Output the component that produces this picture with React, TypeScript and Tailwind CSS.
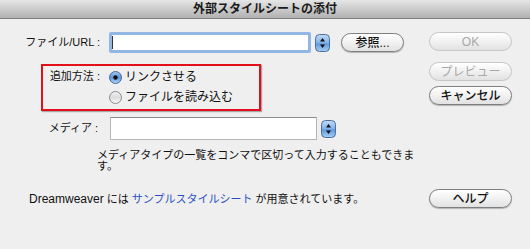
import React from "react";

const FONT = "font-['Liberation_Sans','Noto_Sans_CJK_JP',sans-serif]";

function Stepper({ className = "" }: { className?: string }) {
  return (
    <svg width="15" height="18" viewBox="0 0 15 18" className={className}>
      <defs>
        <linearGradient id="stp" x1="0" y1="0" x2="0" y2="1">
          <stop offset="0" stopColor="#c4dcf6" />
          <stop offset="0.5" stopColor="#7fb0e8" />
          <stop offset="0.55" stopColor="#5f98dc" />
          <stop offset="1" stopColor="#a9d0f6" />
        </linearGradient>
      </defs>
      <rect x="0.5" y="0.5" width="14" height="17" rx="4" fill="url(#stp)" stroke="#4a6e9e" />
      <path d="M7.5 4 L10 7.5 L5 7.5 Z" fill="#111" />
      <path d="M7.5 14 L10 10.5 L5 10.5 Z" fill="#111" />
    </svg>
  );
}

function Radio({ checked }: { checked: boolean }) {
  return (
    <svg width="13" height="13" viewBox="0 0 13 13">
      <defs>
        <linearGradient id="rOn" x1="0" y1="0" x2="0" y2="1">
          <stop offset="0" stopColor="#a7c9ef" />
          <stop offset="0.5" stopColor="#5d96dc" />
          <stop offset="1" stopColor="#b5d6f7" />
        </linearGradient>
        <linearGradient id="rOff" x1="0" y1="0" x2="0" y2="1">
          <stop offset="0" stopColor="#f4f4f4" />
          <stop offset="0.5" stopColor="#dcdcdc" />
          <stop offset="1" stopColor="#fbfbfb" />
        </linearGradient>
      </defs>
      <circle cx="6.5" cy="6.5" r="6" fill={checked ? "url(#rOn)" : "url(#rOff)"} stroke={checked ? "#45699a" : "#8a8a8a"} />
      {checked && <circle cx="6.5" cy="6.5" r="2.2" fill="#111" />}
    </svg>
  );
}

function AquaButton({ label, disabled = false }: { label: string; disabled?: boolean }) {
  return (
    <div
      className={`h-[19px] rounded-full border flex items-center justify-center text-[12px] leading-none bg-gradient-to-b from-[#ffffff] via-[#f1f1f1] to-[#e2e2e2] ${
        disabled
          ? "border-[#c6c6c6] text-[#a8a8a8]"
          : "border-[#7e7e7e] text-[#111] font-medium shadow-[0_1px_1px_rgba(0,0,0,0.25)]"
      }`}
    >
      {label}
    </div>
  );
}

export default function App() {
  return (
    <div className={`w-[530px] h-[249px] bg-[#efefef] text-[#111] ${FONT} overflow-hidden`}>
      {/* title bar */}
      <div className="h-[19px] bg-gradient-to-b from-[#e6e6e6] to-[#b1b1b1] border-b border-[#808080] flex items-center justify-center text-[12px] font-bold text-[#1a1a1a]">
        外部スタイルシートの添付
      </div>

      <div className="flex">
        {/* left form */}
        <div className="flex-1 pt-[13px]">
          <div className="flex items-center h-[21px]">
            <div className="w-[100px] text-right text-[11px]">ファイル/URL :</div>
            <div className="ml-[9px] w-[202px] h-[21px] rounded-[2px] border-[3px] border-[#92b7e4] bg-white flex items-center">
              <div className="w-px h-[13px] bg-[#333]" />
            </div>
            <Stepper className="ml-[4px]" />
            <div className="ml-[11px] w-[63px]">
              <AquaButton label="参照..." />
            </div>
          </div>

          <div className="mt-[11px] ml-[41px] w-[220px] h-[47px] border-2 border-[#e3101c] shadow-[1px_1px_1px_rgba(0,0,0,0.3)] flex pt-[1px]">
            <div className="w-[57px] text-right text-[11px] leading-[14px] pt-[2px]">追加方法 :</div>
            <div className="ml-[9px] flex flex-col">
              <div className="h-[20px] flex items-center gap-[3px] text-[12px]">
                <Radio checked />
                <span>リンクさせる</span>
              </div>
              <div className="h-[20px] flex items-center gap-[3px] text-[12px]">
                <Radio checked={false} />
                <span>ファイルを読み込む</span>
              </div>
            </div>
          </div>

          <div className="mt-[6px] flex items-center h-[23px]">
            <div className="w-[98px] text-right text-[11px]">メディア :</div>
            <div className="ml-[12px] w-[207px] h-[23px] bg-white border border-[#b5b5b5] border-t-[#8c8c8c]" />
            <Stepper className="ml-[4px]" />
          </div>

          <div className="mt-[10px] ml-[97px] text-[11px] leading-[11px]">
            メディアタイプの一覧をコンマで区切って入力することもできま
            <br />す。
          </div>
        </div>

        {/* right buttons */}
        <div className="w-[83px] mr-[18px] pt-[13px] flex flex-col">
          <AquaButton label="OK" disabled />
          <div className="mt-[11px]">
            <AquaButton label="プレビュー" disabled />
          </div>
          <div className="mt-[5px]">
            <AquaButton label="キャンセル" />
          </div>
        </div>
      </div>

      {/* bottom row */}
      <div className="mt-[17px] flex items-center justify-between pl-[29px] pr-[18px]">
        <div className="text-[11px]">
          <span className="text-[12px]">Dreamweaver</span> には{" "}
          <span className="text-[#2a4fc4]">サンプルスタイルシート</span> が用意されています。
        </div>
        <div className="w-[83px]">
          <AquaButton label="ヘルプ" />
        </div>
      </div>
    </div>
  );
}
